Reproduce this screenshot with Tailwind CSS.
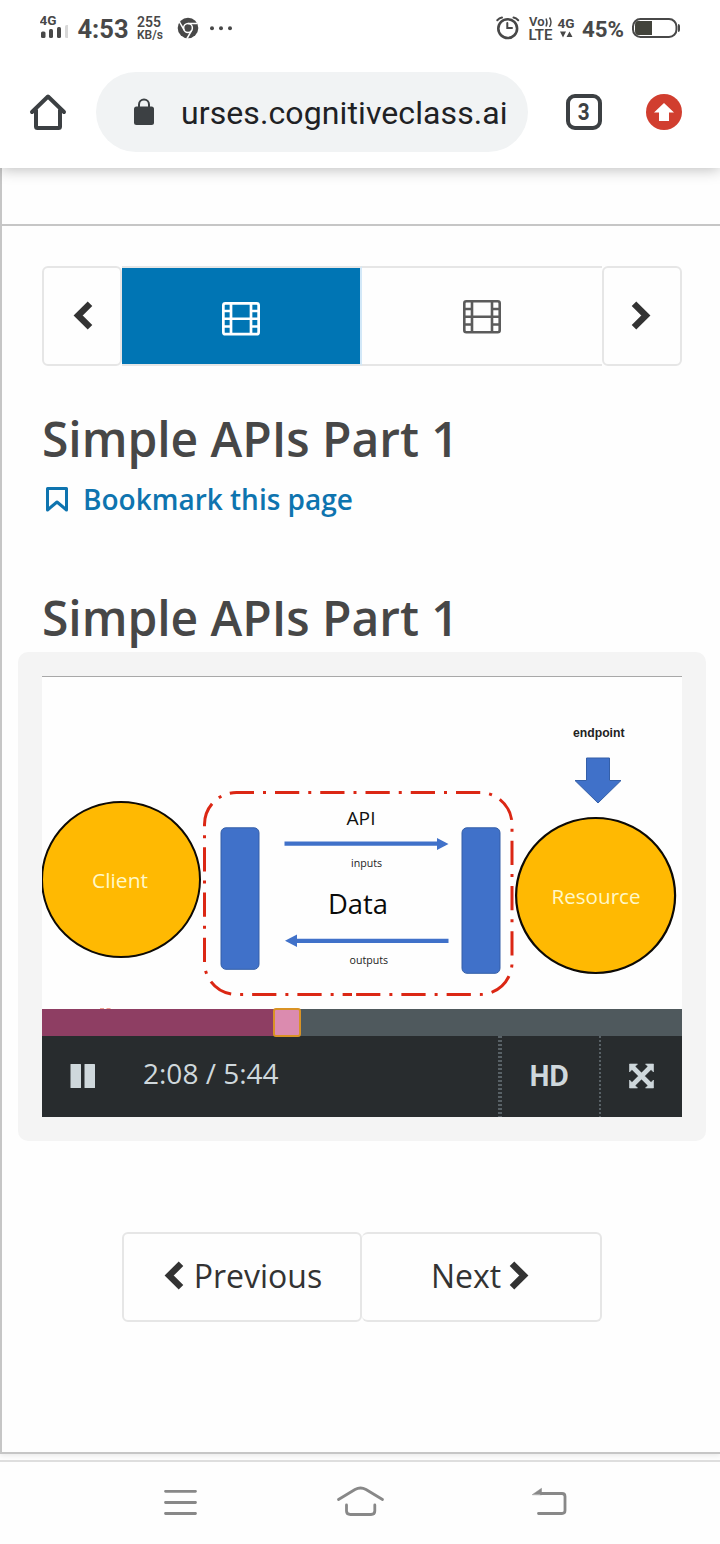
<!DOCTYPE html>
<html lang="en">
<head>
<meta charset="utf-8">
<title>Simple APIs Part 1</title>
<script src="https://cdn.jsdelivr.net/npm/@tailwindcss/browser@4"></script>
</head>
<body class="bg-[#fefefe]">
<div class="flex h-[1544px] w-[720px] flex-col overflow-hidden bg-[#fefefe] font-['Open_Sans',sans-serif] text-[#474747]">

  <!-- Status bar -->
  <header class="z-20 flex h-14 shrink-0 items-start bg-white text-[#484848]">
    <svg class="ml-10 h-14 w-7" viewBox="40 0 28 56" fill="#484848">
      <text x="39.5" y="25" font-family="Roboto" font-weight="700" font-size="13.5" textLength="17" lengthAdjust="spacingAndGlyphs">4G</text>
      <rect x="41" y="31.500" width="4.500" height="6.500" rx="1.500"/><rect x="49" y="29" width="4" height="9" rx="1.500"/><rect x="57" y="27" width="4" height="11" rx="1.500"/><rect x="65" y="25" width="4" height="13" rx="1.500" fill="#d8d8d8"/>
    </svg>
    <svg class="ml-2 h-14 w-14" viewBox="76 0 56 56" fill="#484848">
      <text x="77.500" y="38" font-family="Roboto" font-weight="700" font-size="26" textLength="51" lengthAdjust="spacingAndGlyphs">4:53</text>
    </svg>
    <svg class="ml-1 h-14 w-8" viewBox="136 0 32 56" fill="#484848" font-family="Roboto" font-weight="600">
      <text x="137" y="27" font-size="14" textLength="24" lengthAdjust="spacingAndGlyphs">255</text>
      <text x="137" y="39" font-size="12" textLength="26" lengthAdjust="spacingAndGlyphs">KB/s</text>
    </svg>
    <svg class="ml-2 h-14 w-[64px]" viewBox="176 0 64 56">
      <circle cx="188" cy="28" r="10.300" fill="#484848"/>
      <g stroke="#fefefe" stroke-width="1.500" fill="none"><circle cx="188" cy="28" r="4.400"/><path d="M188 23.600H197.400M184.200 30.200L179.500 22M191.800 30.200L187 38.500"/></g>
      <g fill="#484848"><circle cx="212" cy="28.300" r="2"/><circle cx="221" cy="28.300" r="2"/><circle cx="230" cy="28.300" r="2"/></g>
    </svg>
    <svg class="ml-auto h-14 w-[226px]" viewBox="494 0 226 56" fill="#484848">
      <g fill="none" stroke="#484848" stroke-width="2.600" stroke-linecap="round"><circle cx="507.700" cy="28.600" r="9.400"/><path stroke-width="2" d="M507.300 23V28H512M497.300 20.200Q499.300 18.200 502 17.600M518.200 20.200Q516.200 18.200 513.500 17.600"/></g>
      <g font-family="Roboto" font-weight="600">
        <text x="529" y="26" font-size="12" textLength="15.500" lengthAdjust="spacingAndGlyphs">Vo</text>
        <text x="528.500" y="39.500" font-size="14" textLength="24" lengthAdjust="spacingAndGlyphs">LTE</text>
      </g>
      <path d="M546 18.500Q548 22.500 546 26.500M549.500 17.500Q552.500 22 549.500 27" fill="none" stroke="#484848" stroke-width="1.400"/>
      <text x="557.500" y="28" font-family="Roboto" font-weight="700" font-size="13.500" textLength="17" lengthAdjust="spacingAndGlyphs">4G</text>
      <path d="M560 31.500H566L563 37.500ZM566.500 37L569.500 31.500L572.500 37Z"/>
      <text x="582" y="37" font-family="Roboto" font-weight="700" font-size="22" textLength="42" lengthAdjust="spacingAndGlyphs">45%</text>
      <rect x="633" y="19" width="43.500" height="18" rx="7.500" fill="none" stroke="#484848" stroke-width="2"/>
      <path d="M638 21H652V35H638Q635 35 635 31V25Q635 21 638 21Z" fill="#42433b"/><path d="M678 24Q680 24 680 26V30Q680 32 678 32Z"/>
    </svg>
  </header>

  <!-- Browser toolbar -->
  <div class="z-10 flex h-28 shrink-0 items-center bg-white shadow-[0_1px_14px_rgba(0,0,0,0.28)]">
    <svg class="ml-[28px] h-10 w-10" viewBox="28 92 40 40" fill="none" stroke="#3c4043" stroke-width="4" stroke-linejoin="round" stroke-linecap="round"><path d="M32 112L48 96.500L64 112M36 110V126.500Q36 128 37.500 128H58.500Q60 128 60 126.500V110"/></svg>
    <div class="ml-7 flex h-20 w-[432px] items-center rounded-full bg-[#f1f3f4]">
      <svg class="ml-9 h-8 w-6" viewBox="132 96 24 32"><rect x="134" y="106.500" width="20" height="18.500" rx="2.500" fill="#3c4043"/><path d="M139 108V104.500a5 5 0 0 1 10 0V108" fill="none" stroke="#3c4043" stroke-width="2"/></svg>
      <span class="ml-[25px] pt-0.5 font-['Roboto',sans-serif] text-[32px] leading-10 tracking-[0.1px] whitespace-nowrap text-[#202124]">urses.cognitiveclass.ai</span>
    </div>
    <div class="ml-[38px] flex size-9 items-center justify-center rounded-[9px] border-4 border-[#3c4043] font-['Roboto',sans-serif] text-[23px] leading-none font-bold text-[#3c4043]"><span class="scale-x-90">3</span></div>
    <svg class="ml-11 size-9" viewBox="0 0 36 36"><circle cx="18" cy="18" r="18" fill="#d13e2f"/><path d="M18 9L28 18.500H23V27H13V18.500H8Z" fill="#fff"/></svg>
  </div>

  <!-- Page -->
  <main class="flex h-[1286px] shrink-0 flex-col border-b-2 border-l-2 border-[#c6c6c6] shadow-[0_2px_5px_rgba(0,0,0,0.08)]">
    <div class="h-[58px] shrink-0 border-b-2 border-[#c6c6c6]"></div>

    <nav class="mt-10 ml-10 flex h-[100px] w-[640px] shrink-0">
      <a class="flex w-20 items-center justify-center rounded-md border-2 border-[#e6e6e6]">
        <svg class="ml-0.5 h-8 w-5" viewBox="0 0 20 32" fill="none" stroke="#333" stroke-width="6.500"><path d="M17 3.800L5.200 15.500L17 27.200"/></svg>
      </a>
      <a class="flex w-[240px] items-center justify-center border-y-2 border-r-2 border-[#e6e6e6] border-r-[#d2e8f8] bg-[#0075b4] bg-clip-padding pt-1.5">
        <svg class="h-[34px] w-[38px]" viewBox="0 0 38 34" fill="none" stroke="#fff" stroke-width="2.700"><rect x="1.350" y="1.350" width="35.300" height="30.800" rx="2"/><path d="M9 1V33M29 1V33M9 16.750H29M1 9H9M1 16.750H9M1 24.500H9M29 9H37M29 16.750H37M29 24.500H37"/></svg>
      </a>
      <a class="flex w-60 items-center justify-center border-y-2 border-[#e6e6e6] pt-0.5">
        <svg class="h-[34px] w-[38px]" viewBox="0 0 38 34" fill="none" stroke="#5b5b5b" stroke-width="2.600"><rect x="1.300" y="1.300" width="35.400" height="30.900" rx="2"/><path d="M9 1V33M29 1V33M9 16.750H29M1 9H9M1 16.750H9M1 24.500H9M29 9H37M29 16.750H37M29 24.500H37"/></svg>
      </a>
      <a class="flex w-20 items-center justify-center rounded-md border-2 border-[#e6e6e6]">
        <svg class="mr-0.5 h-8 w-5" viewBox="0 0 20 32" fill="none" stroke="#333" stroke-width="6.500"><path d="M3 3.800L14.800 15.500L3 27.200"/></svg>
      </a>
    </nav>

    <h1 class="mt-[41px] ml-10 shrink-0 text-[48px] leading-[64px] font-semibold tracking-[-0.05px] whitespace-nowrap">Simple APIs Part 1</h1>
    <a class="mt-2 ml-11 flex h-10 shrink-0 items-center text-[28px] leading-10 font-semibold whitespace-nowrap text-[#0e74af]">
      <svg class="mr-[15px] h-[25px] w-[22px]" viewBox="0 0 22 25" fill="none" stroke="#0e74af" stroke-width="3" stroke-linejoin="round"><path d="M1.500 1.500H20.500V23L11 15L1.500 23Z"/></svg>
      Bookmark this page
    </a>
    <h2 class="mt-[67px] ml-10 shrink-0 text-[48px] leading-[64px] font-semibold tracking-[-0.05px] whitespace-nowrap">Simple APIs Part 1</h2>

    <!-- Video player -->
    <section class="mt-0.5 ml-4 h-[489px] w-[688px] shrink-0 rounded-[10px] bg-[#f4f4f4] p-6">
      <svg class="block h-[333px] w-[640px]" viewBox="42 676 640 333">
        <rect x="42" y="676" width="640" height="333" fill="#fefefe"/><rect x="42" y="676" width="640" height="1" fill="#a8a8a8"/>
        <ellipse cx="121" cy="879.500" rx="79" ry="77.500" fill="#ffb902" stroke="#0d0a05" stroke-width="2"/>
        <ellipse cx="595.600" cy="895.500" rx="79.500" ry="77.500" fill="#ffb902" stroke="#0d0a05" stroke-width="2.200"/>
        <g fill="none" stroke="#db2714" stroke-width="3" stroke-dasharray="24.250 9 3 9">
          <path d="M275 792.500H480A32 32 0 0 1 512 824.500V962.500A32 32 0 0 1 480 994.500H352"/>
          <path stroke-dashoffset="24.250" d="M275 792.500H236.500A32 32 0 0 0 204.500 824.500V962.500A32 32 0 0 0 236.500 994.500H352"/>
        </g>
        <g fill="#4071c9" stroke="#345fa8" stroke-width="1"><rect x="221" y="827.800" width="38" height="141.500" rx="5"/><rect x="462" y="827.800" width="38" height="145.500" rx="5"/><path d="M586.500 758H609.500V780.500H621L598 803L575 780.500H586.500Z"/></g>
        <path d="M284.500 841.500H437V838L448.500 844L437 850V845.700H284.500ZM448.500 938.700H297V934.500L285 940.700L297 947V942.900H448.500Z" fill="#4071c9"/>
        <g font-family="Open Sans">
          <text x="92" y="888" font-size="20" fill="#fff8c8" textLength="56" lengthAdjust="spacingAndGlyphs">Client</text>
          <text x="551.500" y="903.500" font-size="20" fill="#fff8c8" textLength="89" lengthAdjust="spacingAndGlyphs">Resource</text>
          <text x="346.500" y="825.300" font-size="18.500" fill="#111" textLength="29" lengthAdjust="spacingAndGlyphs">API</text>
          <text x="328" y="914" font-size="28" fill="#0a0a0a" textLength="60" lengthAdjust="spacingAndGlyphs">Data</text>
          <text x="351" y="867" font-size="10.500" fill="#222" textLength="31" lengthAdjust="spacingAndGlyphs">inputs</text>
          <text x="349.500" y="963.500" font-size="10.500" fill="#222" textLength="38.500" lengthAdjust="spacingAndGlyphs">outputs</text>
        </g>
        <text x="573" y="736.500" font-family="Liberation Sans" font-weight="700" font-size="12" fill="#222" textLength="51.500" lengthAdjust="spacingAndGlyphs">endpoint</text>
        <path d="M100 1008.500H104M106.500 1008.500H110.500" stroke="#f0a090" stroke-width="1"/>
      </svg>
      <div class="relative h-[27px] bg-[#4f595d]">
        <div class="h-[27px] w-[245px] bg-[#8e3e63]"></div>
        <div class="absolute top-[-1px] left-[231px] h-[29px] w-7 rounded-[3px] border-2 border-[#d99325] bg-[#db8baf]"></div>
      </div>
      <div class="flex h-[81px] bg-[#282c2e] text-[#cfd8dc]">
        <svg class="ml-7 h-[81px] w-[26px]" viewBox="0 0 26 81" fill="#cfd8dc"><rect x="0.500" y="28" width="10.500" height="24" rx="0.500"/><rect x="14.500" y="28" width="10.500" height="24" rx="0.500"/></svg>
        <span class="ml-[47px] text-[28px] leading-[75px] font-medium whitespace-nowrap">2:08 / 5:44</span>
        <svg class="ml-auto h-[81px] w-1" viewBox="0 0 4 81"><path d="M2 0V81" stroke="#586166" stroke-width="4" stroke-dasharray="2 2"/></svg>
        <span class="w-[97px] pr-1 text-center text-[29px] leading-[78px] font-bold tracking-[-1.5px]"><span class="inline-block scale-x-95">HD</span></span>
        <svg class="h-[81px] w-0.5" viewBox="0 0 2 81"><path d="M1 0V81" stroke="#586166" stroke-width="2" stroke-dasharray="2 2"/></svg>
        <svg class="ml-7 mr-7 h-[81px] w-[25px]" viewBox="0 0 25 81"><path d="M0.500 28H8.500L0.500 36ZM24.500 28H16.500L24.500 36ZM0.500 52H8.500L0.500 44ZM24.500 52H16.500L24.500 44Z" fill="#cfd8dc" stroke="#cfd8dc" stroke-width="0.600"/><path d="M3.500 31L21.500 49M21.500 31L3.500 49" stroke="#cfd8dc" stroke-width="4.600"/></svg>
      </div>
    </section>

    <div class="mt-[91px] ml-[120px] flex h-[90px] w-[480px] shrink-0 text-[32px] text-[#333]">
      <a class="flex w-60 items-center justify-center rounded-md border-2 border-[#e6e6e6] pb-0.5 pl-0.5">
        <svg class="mr-2.5 h-8 w-5" viewBox="0 0 20 32" fill="none" stroke="#333" stroke-width="6.500"><path d="M17 3.800L5.200 15.500L17 27.200"/></svg>Previous
      </a>
      <a class="flex w-60 items-center justify-center rounded-md border-2 border-l-0 border-[#e6e6e6] pr-0.5 pb-0.5">
        Next<svg class="ml-2 h-8 w-5" viewBox="0 0 20 32" fill="none" stroke="#333" stroke-width="6.500"><path d="M3 3.800L14.800 15.500L3 27.200"/></svg>
      </a>
    </div>
  </main>

  <!-- System navigation -->
  <footer class="mt-1.5 flex h-[84px] shrink-0 border-t-2 border-[#dedede]">
    <svg class="h-[82px] w-[720px]" viewBox="0 1462 720 82" fill="none" stroke="#888" stroke-width="2.800" stroke-linecap="round" stroke-linejoin="round">
      <path d="M165.500 1491.300H195.500M165.500 1502.500H195.500M165.500 1513.500H195.500"/>
      <path d="M338.500 1499.500L355 1489.500Q360.500 1486.500 366 1489.500L382.500 1499.500M346.500 1505V1511Q346.500 1514.500 350.500 1514.500H371Q374.800 1514.500 374.800 1511V1505"/>
      <path d="M538.500 1513.500H562Q565 1513.500 565 1510.500V1496.500Q565 1493.500 562 1493.500H541"/><path d="M532.500 1494.500L541.500 1488.300V1494.500Z" fill="#888" stroke-width="0.500"/>
    </svg>
  </footer>
</div>
</body>
</html>
